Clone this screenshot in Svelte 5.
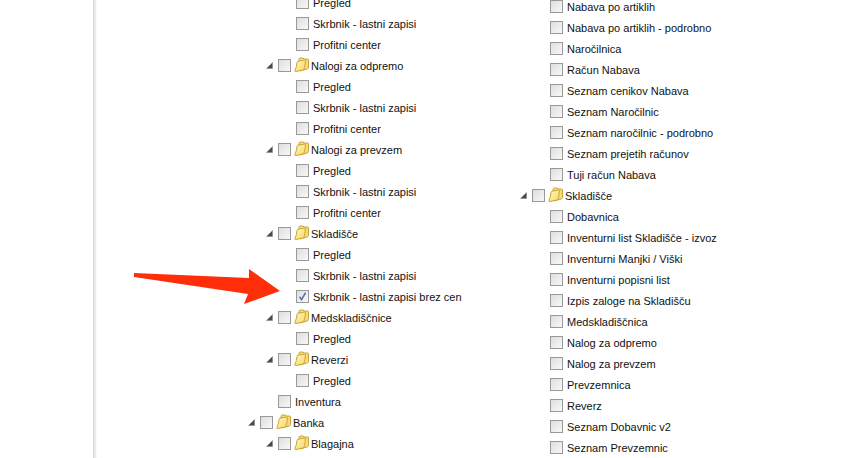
<script lang="ts">
  type Row = { label: string; depth: number; folder?: boolean; checked?: boolean };

  const leaf = (label: string, depth = 2, checked = false): Row => ({ label, depth, checked });
  const dir = (label: string, depth = 1): Row => ({ label, depth, folder: true });

  const left: Row[] = [
    leaf("Pregled"),
    leaf("Skrbnik - lastni zapisi"),
    leaf("Profitni center"),
    dir("Nalogi za odpremo"),
    leaf("Pregled"),
    leaf("Skrbnik - lastni zapisi"),
    leaf("Profitni center"),
    dir("Nalogi za prevzem"),
    leaf("Pregled"),
    leaf("Skrbnik - lastni zapisi"),
    leaf("Profitni center"),
    dir("Skladišče"),
    leaf("Pregled"),
    leaf("Skrbnik - lastni zapisi"),
    leaf("Skrbnik - lastni zapisi brez cen", 2, true),
    dir("Medskladiščnice"),
    leaf("Pregled"),
    dir("Reverzi"),
    leaf("Pregled"),
    leaf("Inventura", 1),
    dir("Banka", 0),
    dir("Blagajna"),
  ];

  const right: Row[] = [
    "Nabava po artiklih",
    "Nabava po artiklih - podrobno",
    "Naročilnica",
    "Račun Nabava",
    "Seznam cenikov Nabava",
    "Seznam Naročilnic",
    "Seznam naročilnic - podrobno",
    "Seznam prejetih računov",
    "Tuji račun Nabava",
  ]
    .map((l) => leaf(l))
    .concat(
      [dir("Skladišče")],
      [
        "Dobavnica",
        "Inventurni list Skladišče - izvoz",
        "Inventurni Manjki / Viški",
        "Inventurni popisni list",
        "Izpis zaloge na Skladišču",
        "Medskladiščnica",
        "Nalog za odpremo",
        "Nalog za prevzem",
        "Prevzemnica",
        "Reverz",
        "Seznam Dobavnic v2",
        "Seznam Prevzemnic",
      ].map((l) => leaf(l))
    );
</script>

{#snippet tree(rows: Row[])}
  {#each rows as row}
    <div class="row" style:--depth={row.depth}>
      <span class="toggle">
        {#if row.folder}
          <svg width="7" height="7" viewBox="0 0 7 7"><path d="M6.500 .5V6.500H.5Z" fill="#4a4a4a" stroke="#8a8a8a" stroke-width=".6" /></svg>
        {/if}
      </span>
      <span class="check">
        {#if row.checked}
          <svg width="11" height="11" viewBox="0 0 11 11"><path d="M2.600 5.800 4.600 8.600 8.600 1.600" fill="none" stroke="#4a6ea8" stroke-width="1.500" /></svg>
        {/if}
      </span>
      {#if row.folder}
        <svg class="folder" width="15" height="15" viewBox="0 0 15 15">
          <defs>
            <linearGradient id="lobe" x1="0" y1="0" x2="1" y2="1">
              <stop offset="0" stop-color="#fff6c8" />
              <stop offset="1" stop-color="#f8d860" />
            </linearGradient>
          </defs>
          <path d="M5 11V2.500Q5 1 6.500 1H9L10 2H13.500Q14.500 2 14.500 3V10.500Q14.500 11.500 13.500 11.800L6 14Z" fill="#f6dc78" stroke="#c9a238" />
          <path d="M.8 13.800Q2.800 9.500 3 5.500Q3 4.500 4 4.200L10.500 3Q11.500 3 11.400 4C11.200 7 10.800 10 10 12Q9.800 12.800 9 13L2 14.500Q.8 14.800 .8 13.800Z" fill="url(#lobe)" stroke="#cba432" />
        </svg>
      {/if}
      <span class="label" class:dir={row.folder}>{row.label}</span>
    </div>
  {/each}
{/snippet}

<div class="page">
  <div class="panel">
    <div class="col col-left">{@render tree(left)}</div>
    <div class="col col-right">{@render tree(right)}</div>
  </div>
  <svg class="arrow" width="150" height="40" viewBox="0 0 150 40">
    <path d="M1 5 116 10 116 1 147 23 111 36 115 26 1 9Z" fill="#fe2e0a" />
  </svg>
</div>

<style>
  :global(body) {
    margin: 0;
    background: #fff;
  }

  .page {
    position: relative;
    width: 868px;
    height: 458px;
    overflow: hidden;
    background: #fff;
  }

  .panel {
    display: grid;
    grid-template-columns: 272px 1fr;
    height: 100%;
    margin-left: 93px;
    border-left: 1px solid #d4dcd6;
    box-shadow: inset 3px 0 2px -1px #e6e6e6;
    font-family: "Liberation Sans", Arial, sans-serif;
    font-size: 11px;
    color: #111;
  }

  .col-left {
    margin-top: -8px;
    padding-left: 154px;
  }

  .col-right {
    margin-top: -4px;
    padding-left: 136px;
  }

  .row {
    display: flex;
    align-items: center;
    height: 21px;
    padding-left: calc(var(--depth) * 18px);
    white-space: nowrap;
  }

  .toggle {
    display: flex;
    width: 12px;
    flex: none;
  }

  .check {
    display: flex;
    align-items: center;
    justify-content: center;
    box-sizing: border-box;
    width: 13px;
    height: 13px;
    flex: none;
    border: 1px solid #999;
    background: linear-gradient(135deg, #dedede, #f8f8f8);
  }

  .folder {
    flex: none;
    margin-left: 3px;
    margin-top: -2px;
  }

  .label {
    margin-left: 4px;
  }

  .label.dir {
    margin-left: 2px;
  }

  .arrow {
    position: absolute;
    left: 133px;
    top: 268px;
  }
</style>
